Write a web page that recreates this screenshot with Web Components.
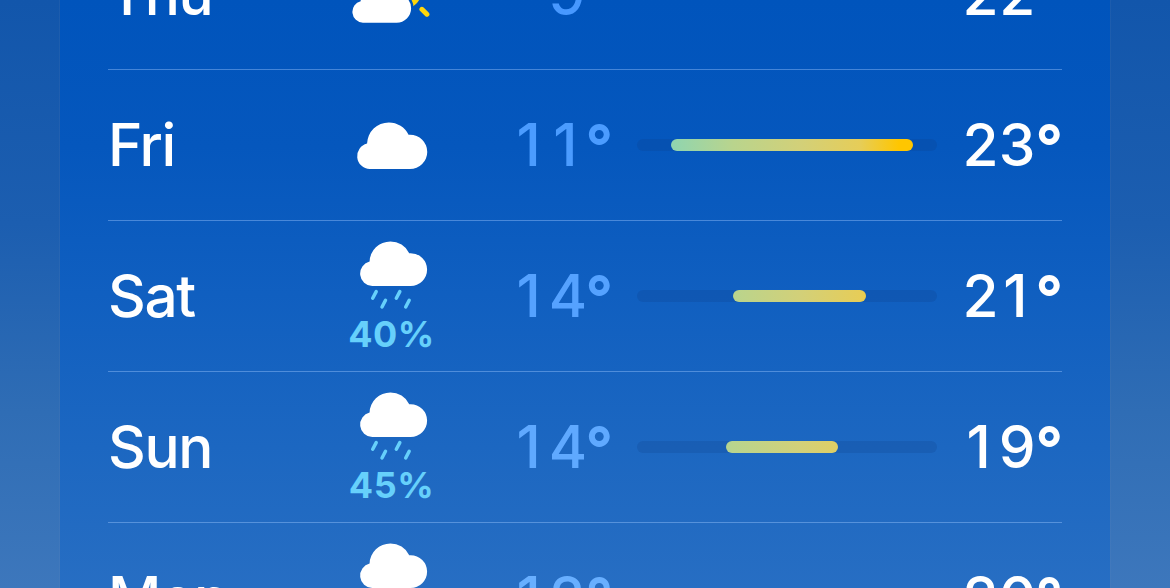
<!DOCTYPE html>
<html lang="en">
<head>
<meta charset="utf-8">
<title>Forecast</title>
<style>
  html, body {
    margin: 0;
    height: 100%;
    overflow: hidden;
  }

  body {
    font-family: Inter, "Liberation Sans", sans-serif;
    color: #fff;
    background: linear-gradient(to bottom, #1256ab 0%, #1c5eb0 38%, #2f6db5 70%, #3d77bc 100%);
  }
</style>
</head>
<body>
<forecast-card>
  <forecast-day day="Thu" icon="cloud-sun" low="9" high="22" from="24" to="230" style="--low: #4798ff"></forecast-day>
  <forecast-day day="Fri" icon="cloud" low="11" high="23" from="34" to="276" style="--low: #4b9cff"></forecast-day>
  <forecast-day day="Sat" icon="rain" chance="40%" low="14" high="21" from="96" to="229" style="--low: #55a2ff"></forecast-day>
  <forecast-day day="Sun" icon="rain" chance="45%" low="14" high="19" from="89" to="201" style="--low: #5fa9ff"></forecast-day>
  <forecast-day day="Mon" icon="rain" chance="50%" low="12" high="20" from="60" to="215" style="--low: #68afff"></forecast-day>
</forecast-card>

<script>
const CLOUD = 'M13 46.7A13 13 0 0 1 10.3 21.1A21.7 21.7 0 0 1 32 0A21.7 21.7 0 0 1 51.6 12.4L53 12.3A17.2 17.2 0 0 1 53 46.7Z';

const ICONS = {
  'cloud': `
    <svg width="70" height="47" viewBox="0 0 70 47">
      <path fill="#fff" transform="translate(-.3 .4) scale(1.005 1)" d="${CLOUD}"/>
    </svg>`,
  'rain': `
    <svg width="67" height="69" viewBox="0 0 67 69">
      <path fill="#fff" transform="translate(-.3 .4) scale(.96 .955)" d="${CLOUD}"/>
      <path fill="none" stroke="#66d0fb" stroke-width="3.5" stroke-linecap="round"
        d="M16.2 50.6l-3.5 6.6M25.5 59.3L22 66M39.8 50.6l-3.5 6.6M49.2 59.3l-3.5 6.7"/>
    </svg>`,
  'cloud-sun': `
    <svg width="80" height="59" viewBox="0 0 80 59">
      <mask id="gap">
        <rect width="80" height="59" fill="#fff"/>
        <path transform="translate(0 18.4) scale(.842)" fill="#000" stroke="#000" stroke-width="6" d="${CLOUD}"/>
      </mask>
      <g mask="url(#gap)" fill="#ffd60a" stroke="#ffd60a">
        <circle cx="52" cy="26.5" r="17.3" stroke="none"/>
        <path stroke-width="5" stroke-linecap="round" d="M69.9 44.3l5 4.9M76 27h2M69.8 10.5l5.3-5.3M52 4V2M36.2 10.5l-5.3-5.3"/>
      </g>
      <path transform="translate(0 18.4) scale(.842)" fill="#fff" d="${CLOUD}"/>
    </svg>`
};

// Card that holds the list of days
class ForecastCard extends HTMLElement {
  constructor() {
    super();
    this.attachShadow({ mode: 'open' });
    this.shadowRoot.innerHTML = `
      <style>
        :host {
          display: flex;
          flex-direction: column;
          box-sizing: border-box;
          width: 1050px;
          height: 588px;
          margin: 0 auto;
          padding: 0 48px;
          overflow: hidden;
          background: linear-gradient(to bottom, #0054bc 0%, #0557bd 25%, #105fc0 50%, #1c67c1 76%, #276ec3 100%);
          box-shadow: 0 0 0 1px rgba(120, 150, 200, 0.1);
        }

        /* the list is scrolled part of the way through the first day */
        .list {
          flex: none;
          margin-top: -81px;
        }
      </style>
      <div class="list"><slot></slot></div>
    `;
  }
}

// Track with the coloured part between the low and the high
class TempRange extends HTMLElement {
  constructor() {
    super();
    this.attachShadow({ mode: 'open' });
  }

  connectedCallback() {
    const from = Number(this.getAttribute('from'));
    const to = Number(this.getAttribute('to'));

    this.shadowRoot.innerHTML = `
      <style>
        :host {
          display: block;
          width: 300px;
          height: 12px;
          border-radius: 6px;
          background: rgba(12, 62, 130, 0.21);
        }

        .fill {
          width: ${to - from}px;
          height: 12px;
          margin-left: ${from}px;
          border-radius: 6px;
          background: linear-gradient(to right, #8fd5b0 34px, #b9d48d 96px, #d3d078 165px, #e6cd58 223px, #ffc600 262px);
          background-size: 300px 12px;
          background-position: -${from}px 0;
        }
      </style>
      <div class="fill"></div>
    `;
  }
}

// Temperature with every digit in a cell of the same width
class TempValue extends HTMLElement {
  constructor() {
    super();
    this.attachShadow({ mode: 'open' });
  }

  connectedCallback() {
    const digits = [...this.getAttribute('value')];

    this.shadowRoot.innerHTML = `
      <style>
        :host {
          display: flex;
          justify-content: flex-end;
        }

        span {
          width: 36.7px;
          text-align: center;
        }

        .one {
          width: 39.2px;
          margin-left: -2.5px;
          margin-right: 0;
          text-indent: -1px;
        }

        .degree {
          width: 26.5px;
          padding-top: 1px;
          font-size: 60px;
          font-weight: 650;
        }
      </style>
      ${digits.map(digit => `<span class="${digit === '1' ? 'one' : ''}">${digit}</span>`).join('')}<span class="degree">°</span>
    `;
  }
}

class ForecastDay extends HTMLElement {
  constructor() {
    super();
    this.attachShadow({ mode: 'open' });
  }

  connectedCallback() {
    const get = name => this.getAttribute(name);
    const chance = get('chance');

    this.shadowRoot.innerHTML = `
      <style>
        :host {
          display: grid;
          grid-template-columns: 234px 103px 167px 25px 300px 125px;
          align-items: center;
          height: 150px;
          border-bottom: 1px solid rgba(160, 200, 255, 0.42);
          font-size: 58.5px;
          font-weight: 500;
          line-height: 70px;
        }

        .day {
          letter-spacing: -1.4px;
        }

        .sky {
          display: flex;
          flex-direction: column;
          align-items: center;
          width: 103px;
        }

        svg {
          display: block;
          overflow: visible;
        }

        .sky.plain {
          width: 100px;
        }

        .chance {
          height: 41px;
          margin-left: -4px;
          font-size: 36px;
          font-weight: 650;
          line-height: 48px;
          letter-spacing: 0.5px;
          color: #66d0fb;
        }

        .low {
          color: var(--low, #54a2ff);
        }

        temp-range {
          grid-column: 5;
        }
      </style>
      <span class="day">${get('day')}</span>
      <span class="sky ${chance ? '' : 'plain'}">
        ${ICONS[get('icon')]}
        ${chance ? `<span class="chance">${chance}</span>` : ''}
      </span>
      <temp-value class="low" value="${get('low')}"></temp-value>
      <temp-range from="${get('from')}" to="${get('to')}"></temp-range>
      <temp-value value="${get('high')}"></temp-value>
    `;
  }
}

customElements.define('temp-range', TempRange);
customElements.define('temp-value', TempValue);
customElements.define('forecast-day', ForecastDay);
customElements.define('forecast-card', ForecastCard);
</script>
</body>
</html>
